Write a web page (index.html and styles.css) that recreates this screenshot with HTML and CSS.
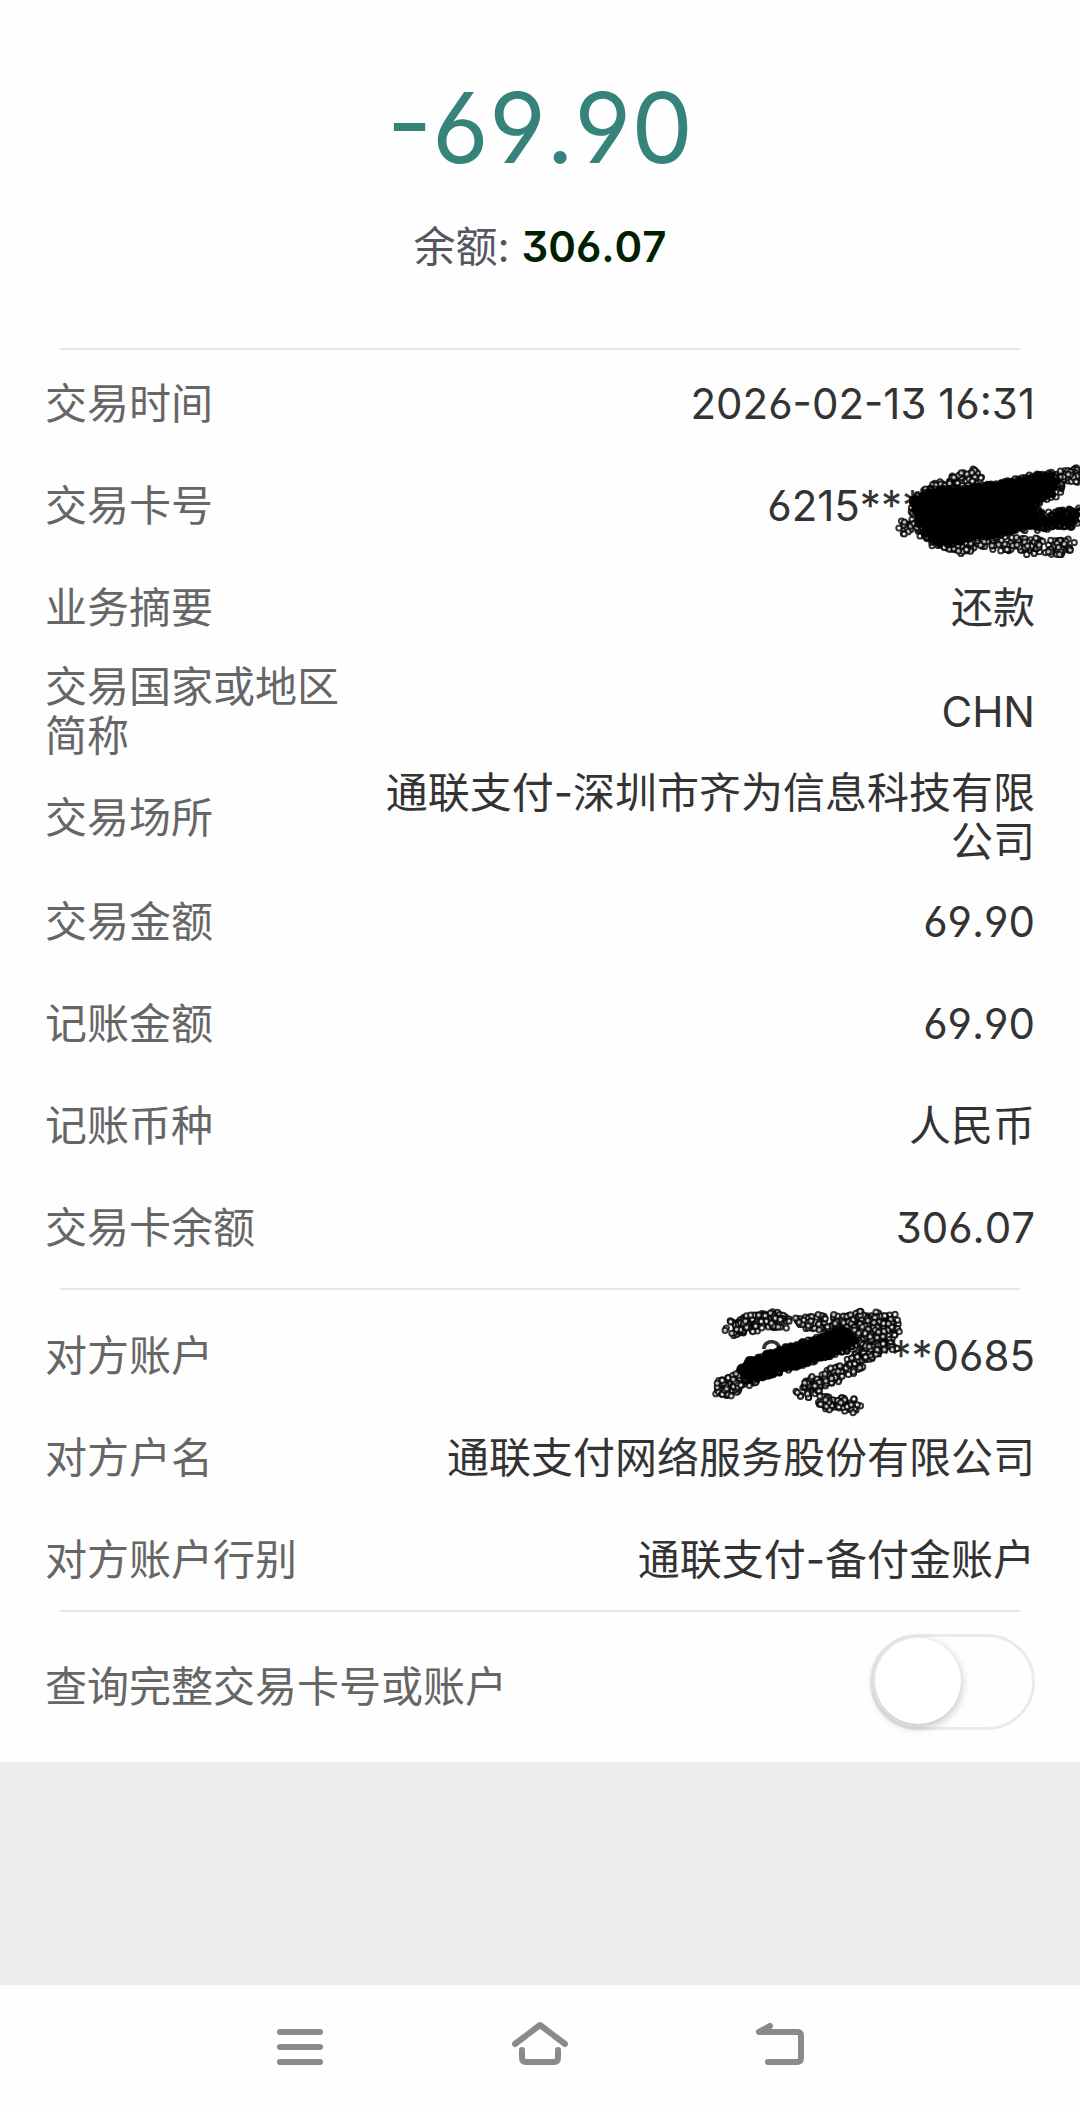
FILE: index.html
```html
<!DOCTYPE html>
<html lang="zh-CN">
<head>
<meta charset="utf-8">
<meta name="viewport" content="width=device-width, initial-scale=1">
<title>交易详情</title>
<link rel="stylesheet" href="styles.css">
</head>
<body>
<main class="detail">
  <header class="summary">
    <p class="amount">-69.90</p>
    <p class="balance">余额: <strong class="balance-value">306.07</strong></p>
  </header>
  <dl class="group">
    <div class="row"><dt>交易时间</dt><dd>2026-02-13 16:31</dd></div>
    <div class="row"><dt>交易卡号</dt><dd>6215***<span class="masked"><svg class="ink ink-card" width="192" height="100" viewBox="888 462 192 100" aria-hidden="true"></svg></span></dd></div>
    <div class="row"><dt>业务摘要</dt><dd>还款</dd></div>
    <div class="row"><dt>交易国家或地区简称</dt><dd>CHN</dd></div>
    <div class="row"><dt>交易场所</dt><dd>通联支付-深圳市齐为信息科技有限公司</dd></div>
    <div class="row"><dt>交易金额</dt><dd>69.90</dd></div>
    <div class="row"><dt>记账金额</dt><dd>69.90</dd></div>
    <div class="row"><dt>记账币种</dt><dd>人民币</dd></div>
    <div class="row"><dt>交易卡余额</dt><dd>306.07</dd></div>
  </dl>
  <dl class="group group-party">
    <div class="row"><dt>对方账户</dt><dd>2<span class="masked masked-short"><svg class="ink ink-account" width="200" height="116" viewBox="710 1304 200 116" aria-hidden="true"></svg></span>****0685</dd></div>
    <div class="row"><dt>对方户名</dt><dd>通联支付网络服务股份有限公司</dd></div>
    <div class="row"><dt>对方账户行别</dt><dd>通联支付-备付金账户</dd></div>
  </dl>
  <div class="query">
    <label for="full">查询完整交易卡号或账户</label>
    <input class="switch" id="full" type="checkbox" role="switch">
  </div>
</main>
<nav class="navbar" aria-label="系统导航">
  <button class="key" type="button" aria-label="最近任务"><svg width="60" height="60" viewBox="0 0 60 60"><path d="M10 15H50M10 30H50M10 45H50"/></svg></button>
  <button class="key" type="button" aria-label="主页"><svg width="60" height="60" viewBox="0 0 60 60"><path d="M5 27L30 8L55 27M12 33V41Q12 45 16 45H44Q48 45 48 41V33"/></svg></button>
  <button class="key" type="button" aria-label="返回"><svg width="60" height="60" viewBox="0 0 60 60"><path d="M20 9L9 15H47Q51 15 51 19V41Q51 45 47 45H18"/><path class="solid" d="M9 15L20 9V15Z"/></svg></button>
</nav>
<script src="ink.js"></script>
</body>
</html>
```
FILE: styles.css
```css
* { box-sizing: border-box; }

body {
  margin: 0;
  min-height: 100vh;
  display: flex;
  flex-direction: column;
  background: #ededed;
  color: #333;
  font: 42px/49px Inter, "Noto Sans CJK SC", sans-serif;
  font-feature-settings: "ss01";
  font-kerning: none;
  overflow-x: hidden;
}

p, dl, dd { margin: 0; }

.detail { background: #fefefe; }

.summary {
  height: 348px;
  padding-top: 72px;
  text-align: center;
}

.amount {
  font-size: 98px;
  line-height: 112px;
  color: #35837b;
}

.balance {
  margin-top: 38px;
  color: #555560;
}

.balance-value {
  font-weight: 600;
  color: #021f02;
}

.group { padding: 4px 45px 10px; position: relative; }
.group-party { padding: 16px 45px 0; }

.group::before,
.query::before {
  content: "";
  position: absolute;
  top: 0;
  left: 60px;
  right: 60px;
  height: 2px;
  background: #e6e6e6;
}

.row {
  display: flex;
  align-items: center;
  gap: 30px;
  min-height: 102px;
  padding: 4px 0;
}

.row dt {
  flex: 0 0 300px;
  color: #666;
}

.row dd {
  flex: 1;
  text-align: right;
}

.masked {
  display: inline-block;
  position: relative;
  width: 112px;
  height: 30px;
}

.masked-short { width: 64px; }

.ink {
  position: absolute;
  overflow: visible;
  fill: none;
  stroke: #000;
  stroke-width: 2;
  stroke-opacity: .8;
}

.ink .light {
  fill: #fff;
  fill-opacity: .7;
}

.ink-card { left: -35px; top: -30px; }
.ink-account { left: -74px; top: -37px; }

.query {
  position: relative;
  display: flex;
  align-items: flex-start;
  justify-content: space-between;
  min-height: 152px;
  padding: 24px 45px 0;
  color: #666;
}

.query label { padding-top: 28px; }

.switch {
  appearance: none;
  margin: 0;
  width: 165px;
  height: 96px;
  border: 3px solid #ebebeb;
  border-radius: 48px;
  background: #fefefe;
}

.switch::before {
  content: "";
  display: block;
  width: 86px;
  height: 86px;
  margin: 1px 2px;
  border-radius: 50%;
  background: #fff;
  box-shadow: 0 3px 8px 1px rgba(0, 0, 0, .22);
}

.switch:checked { background: #35837b; }
.switch:checked::before { margin-left: 70px; }

.navbar {
  display: flex;
  justify-content: center;
  gap: 180px;
  height: 123px;
  margin-top: auto;
  padding-top: 32px;
  background: #fefefe;
}

.key {
  width: 60px;
  height: 60px;
  padding: 0;
  border: 0;
  background: none;
}

.key svg {
  display: block;
  fill: none;
  stroke: #8a8a8a;
  stroke-width: 6;
  stroke-linecap: round;
  stroke-linejoin: round;
}

.key .solid { fill: #8a8a8a; stroke: none; }
```
FILE: ink.js
```js
// Covers the hidden digits with a brush made of small rings.
// Each stroke: x1, y1, x2, y2, brush radius, number of rings.
const strokes = {
  ".ink-card": [
    [908, 532, 903, 526, 6, 14],
    [920, 500, 976, 476, 9, 100],
    [1030, 490, 1080, 475, 9, 90],
    [950, 543, 1072, 549, 9, 180],
    [918, 520, 960, 545, 12, 180],
    [925, 508, 1000, 502, 18, 900],
    [935, 528, 1010, 514, 20, 1100],
    [960, 505, 1050, 486, 14, 900],
    [1000, 502, 1034, 514, 12, 200],
    [1010, 524, 1080, 518, 10, 200]
  ],
  ".ink-account": [
    [732, 1328, 780, 1318, 9, 120],
    [780, 1321, 855, 1323, 8, 95],
    [850, 1318, 895, 1322, 9, 100],
    [845, 1335, 897, 1332, 11, 110],
    [722, 1390, 760, 1370, 10, 130],
    [800, 1393, 862, 1360, 9, 130],
    [855, 1358, 893, 1343, 8, 65],
    [822, 1402, 855, 1406, 8, 65],
    [750, 1370, 845, 1340, 12, 800]
  ]
};

// Strokes with fewer rings than this keep white ring centres.
const denseCount = 190;

let seed = 7;
function random() {
  seed = (seed * 16807) % 2147483647;
  return seed / 2147483647;
}

for (const [selector, lines] of Object.entries(strokes)) {
  const ink = document.querySelector(selector);
  for (const [x1, y1, x2, y2, radius, count] of lines) {
    for (let i = 0; i < count; i++) {
      const t = random();
      const angle = random() * Math.PI * 2;
      const reach = Math.sqrt(random()) * radius;
      const ring = document.createElementNS("http://www.w3.org/2000/svg", "circle");
      ring.setAttribute("cx", x1 + (x2 - x1) * t + Math.cos(angle) * reach);
      ring.setAttribute("cy", y1 + (y2 - y1) * t + Math.sin(angle) * reach);
      ring.setAttribute("r", 2.6);
      if (count < denseCount) ring.setAttribute("class", "light");
      ink.append(ring);
    }
  }
}
```
